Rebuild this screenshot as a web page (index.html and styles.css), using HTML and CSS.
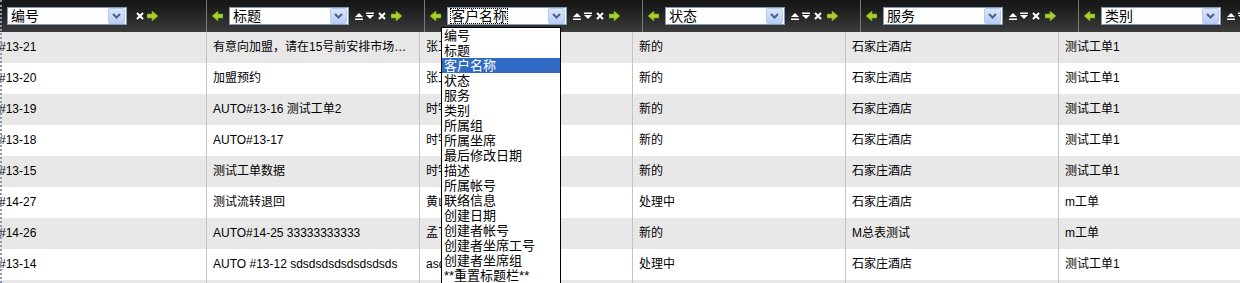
FILE: index.html
```
<!DOCTYPE html>
<html lang="zh-CN">
<head>
    <meta charset="UTF-8">
    <title>工单列表</title>
    <link rel="stylesheet" href="styles.css">
</head>
<body>
    <div class="grid">
        <div class="head">
            <div class="hcol first">
                <div class="combo"><span class="combo-text">编号</span><span class="combo-btn"><svg width="9" height="6" viewBox="0 0 9 6"><path d="M1 1 L4.5 4.5 L8 1" fill="none" stroke="#4d6185" stroke-width="2"/></svg></span></div>
                <svg class="ico x" width="10" height="10" viewBox="0 0 10 10"><path d="M2 2 L8 8 M8 2 L2 8" stroke="#fff" stroke-width="2"/></svg>
                <svg class="ico rarrow" width="11" height="10" viewBox="0 0 11 10"><path d="M0 3 H5 V0 L11 5 L5 10 V7 H0 Z" fill="#a4d22c" stroke="#7aa018" stroke-width="0.6"/></svg>
            </div>
            <div class="hcol">
                <svg class="ico larrow" width="11" height="10" viewBox="0 0 11 10"><path d="M11 3 H6 V0 L0 5 L6 10 V7 H11 Z" fill="#a4d22c" stroke="#7aa018" stroke-width="0.6"/></svg>
                <div class="combo"><span class="combo-text">标题</span><span class="combo-btn"><svg width="9" height="6" viewBox="0 0 9 6"><path d="M1 1 L4.5 4.5 L8 1" fill="none" stroke="#4d6185" stroke-width="2"/></svg></span></div>
                <svg class="ico up" width="10" height="10" viewBox="0 0 10 10"><path d="M1 6 L5 2 L9 6 Z M1 7.5 H9 V9 H1 Z" fill="#fff"/></svg>
                <svg class="ico down" width="10" height="10" viewBox="0 0 10 10"><path d="M1 1.5 H9 V3 H1 Z M1 4 L9 4 L5 8 Z" fill="#fff"/></svg>
                <svg class="ico x" width="10" height="10" viewBox="0 0 10 10"><path d="M2 2 L8 8 M8 2 L2 8" stroke="#fff" stroke-width="2"/></svg>
                <svg class="ico rarrow" width="11" height="10" viewBox="0 0 11 10"><path d="M0 3 H5 V0 L11 5 L5 10 V7 H0 Z" fill="#a4d22c" stroke="#7aa018" stroke-width="0.6"/></svg>
            </div>
            <div class="hcol">
                <svg class="ico larrow" width="11" height="10" viewBox="0 0 11 10"><path d="M11 3 H6 V0 L0 5 L6 10 V7 H11 Z" fill="#a4d22c" stroke="#7aa018" stroke-width="0.6"/></svg>
                <div class="combo open"><span class="combo-text"><span class="focus">客户名称</span></span><span class="combo-btn"><svg width="9" height="6" viewBox="0 0 9 6"><path d="M1 1 L4.5 4.5 L8 1" fill="none" stroke="#4d6185" stroke-width="2"/></svg></span></div>
                <svg class="ico up" width="10" height="10" viewBox="0 0 10 10"><path d="M1 6 L5 2 L9 6 Z M1 7.5 H9 V9 H1 Z" fill="#fff"/></svg>
                <svg class="ico down" width="10" height="10" viewBox="0 0 10 10"><path d="M1 1.5 H9 V3 H1 Z M1 4 L9 4 L5 8 Z" fill="#fff"/></svg>
                <svg class="ico x" width="10" height="10" viewBox="0 0 10 10"><path d="M2 2 L8 8 M8 2 L2 8" stroke="#fff" stroke-width="2"/></svg>
                <svg class="ico rarrow" width="11" height="10" viewBox="0 0 11 10"><path d="M0 3 H5 V0 L11 5 L5 10 V7 H0 Z" fill="#a4d22c" stroke="#7aa018" stroke-width="0.6"/></svg>
            </div>
            <div class="hcol">
                <svg class="ico larrow" width="11" height="10" viewBox="0 0 11 10"><path d="M11 3 H6 V0 L0 5 L6 10 V7 H11 Z" fill="#a4d22c" stroke="#7aa018" stroke-width="0.6"/></svg>
                <div class="combo"><span class="combo-text">状态</span><span class="combo-btn"><svg width="9" height="6" viewBox="0 0 9 6"><path d="M1 1 L4.5 4.5 L8 1" fill="none" stroke="#4d6185" stroke-width="2"/></svg></span></div>
                <svg class="ico up" width="10" height="10" viewBox="0 0 10 10"><path d="M1 6 L5 2 L9 6 Z M1 7.5 H9 V9 H1 Z" fill="#fff"/></svg>
                <svg class="ico down" width="10" height="10" viewBox="0 0 10 10"><path d="M1 1.5 H9 V3 H1 Z M1 4 L9 4 L5 8 Z" fill="#fff"/></svg>
                <svg class="ico x" width="10" height="10" viewBox="0 0 10 10"><path d="M2 2 L8 8 M8 2 L2 8" stroke="#fff" stroke-width="2"/></svg>
                <svg class="ico rarrow" width="11" height="10" viewBox="0 0 11 10"><path d="M0 3 H5 V0 L11 5 L5 10 V7 H0 Z" fill="#a4d22c" stroke="#7aa018" stroke-width="0.6"/></svg>
            </div>
            <div class="hcol">
                <svg class="ico larrow" width="11" height="10" viewBox="0 0 11 10"><path d="M11 3 H6 V0 L0 5 L6 10 V7 H11 Z" fill="#a4d22c" stroke="#7aa018" stroke-width="0.6"/></svg>
                <div class="combo"><span class="combo-text">服务</span><span class="combo-btn"><svg width="9" height="6" viewBox="0 0 9 6"><path d="M1 1 L4.5 4.5 L8 1" fill="none" stroke="#4d6185" stroke-width="2"/></svg></span></div>
                <svg class="ico up" width="10" height="10" viewBox="0 0 10 10"><path d="M1 6 L5 2 L9 6 Z M1 7.5 H9 V9 H1 Z" fill="#fff"/></svg>
                <svg class="ico down" width="10" height="10" viewBox="0 0 10 10"><path d="M1 1.5 H9 V3 H1 Z M1 4 L9 4 L5 8 Z" fill="#fff"/></svg>
                <svg class="ico x" width="10" height="10" viewBox="0 0 10 10"><path d="M2 2 L8 8 M8 2 L2 8" stroke="#fff" stroke-width="2"/></svg>
                <svg class="ico rarrow" width="11" height="10" viewBox="0 0 11 10"><path d="M0 3 H5 V0 L11 5 L5 10 V7 H0 Z" fill="#a4d22c" stroke="#7aa018" stroke-width="0.6"/></svg>
            </div>
            <div class="hcol last">
                <svg class="ico larrow" width="11" height="10" viewBox="0 0 11 10"><path d="M11 3 H6 V0 L0 5 L6 10 V7 H11 Z" fill="#a4d22c" stroke="#7aa018" stroke-width="0.6"/></svg>
                <div class="combo"><span class="combo-text">类别</span><span class="combo-btn"><svg width="9" height="6" viewBox="0 0 9 6"><path d="M1 1 L4.5 4.5 L8 1" fill="none" stroke="#4d6185" stroke-width="2"/></svg></span></div>
                <svg class="ico up" width="10" height="10" viewBox="0 0 10 10"><path d="M1 6 L5 2 L9 6 Z M1 7.5 H9 V9 H1 Z" fill="#fff"/></svg>
                <svg class="ico down" width="10" height="10" viewBox="0 0 10 10"><path d="M1 1.5 H9 V3 H1 Z M1 4 L9 4 L5 8 Z" fill="#fff"/></svg>
                <svg class="ico x" width="10" height="10" viewBox="0 0 10 10"><path d="M2 2 L8 8 M8 2 L2 8" stroke="#fff" stroke-width="2"/></svg>
            </div>
        </div>

        <div class="body">
            <div class="row odd">
                <div class="cell first">#13-21</div>
                <div class="cell">有意向加盟，请在15号前安排市场部人员联系</div>
                <div class="cell">张工</div>
                <div class="cell">新的</div>
                <div class="cell">石家庄酒店</div>
                <div class="cell">测试工单1</div>
            </div>
            <div class="row">
                <div class="cell first">#13-20</div>
                <div class="cell">加盟预约</div>
                <div class="cell">张工</div>
                <div class="cell">新的</div>
                <div class="cell">石家庄酒店</div>
                <div class="cell">测试工单1</div>
            </div>
            <div class="row odd">
                <div class="cell first">#13-19</div>
                <div class="cell">AUTO#13-16 测试工单2</div>
                <div class="cell">时宇</div>
                <div class="cell">新的</div>
                <div class="cell">石家庄酒店</div>
                <div class="cell">测试工单1</div>
            </div>
            <div class="row">
                <div class="cell first">#13-18</div>
                <div class="cell">AUTO#13-17</div>
                <div class="cell">时宇</div>
                <div class="cell">新的</div>
                <div class="cell">石家庄酒店</div>
                <div class="cell">测试工单1</div>
            </div>
            <div class="row odd">
                <div class="cell first">#13-15</div>
                <div class="cell">测试工单数据</div>
                <div class="cell">时宇</div>
                <div class="cell">新的</div>
                <div class="cell">石家庄酒店</div>
                <div class="cell">测试工单1</div>
            </div>
            <div class="row">
                <div class="cell first">#14-27</div>
                <div class="cell">测试流转退回</div>
                <div class="cell">黄山</div>
                <div class="cell">处理中</div>
                <div class="cell">石家庄酒店</div>
                <div class="cell">m工单</div>
            </div>
            <div class="row odd">
                <div class="cell first">#14-26</div>
                <div class="cell">AUTO#14-25 33333333333</div>
                <div class="cell">孟飞</div>
                <div class="cell">新的</div>
                <div class="cell">M总表测试</div>
                <div class="cell">m工单</div>
            </div>
            <div class="row">
                <div class="cell first">#13-14</div>
                <div class="cell">AUTO #13-12 sdsdsdsdsdsdsdsds</div>
                <div class="cell">asd</div>
                <div class="cell">处理中</div>
                <div class="cell">石家庄酒店</div>
                <div class="cell">测试工单1</div>
            </div>
            <div class="row odd">
                <div class="cell first">#13-13</div>
                <div class="cell">测试</div>
                <div class="cell">asd</div>
                <div class="cell">新的</div>
                <div class="cell">石家庄酒店</div>
                <div class="cell">测试工单1</div>
            </div>
        </div>

        <ul class="dropdown">
            <li>编号</li>
            <li>标题</li>
            <li class="selected">客户名称</li>
            <li>状态</li>
            <li>服务</li>
            <li>类别</li>
            <li>所属组</li>
            <li>所属坐席</li>
            <li>最后修改日期</li>
            <li>描述</li>
            <li>所属帐号</li>
            <li>联络信息</li>
            <li>创建日期</li>
            <li>创建者帐号</li>
            <li>创建者坐席工号</li>
            <li>创建者坐席组</li>
            <li>**重置标题栏**</li>
        </ul>
    </div>
</body>
</html>
```
FILE: styles.css
```
body {
    margin: 0;
    padding: 0;
    background-color: #fff;
    font-family: "Liberation Sans", "Noto Sans CJK SC", sans-serif;
    overflow: hidden;
}

.grid {
    position: relative;
    width: 1240px;
    height: 283px;
    overflow: hidden;
}

.grid::before {
    content: "";
    position: absolute;
    left: 0;
    top: 0;
    bottom: 0;
    width: 0;
    border-left: 2px dotted #8a9ab0;
    z-index: 3;
}

/* header */
.head {
    display: flex;
    height: 32px;
    background: linear-gradient(to bottom, #151515 0%, #1e1e1e 30%, #333 80%, #3c3c3c 100%);
}

.hcol {
    flex: none;
    width: 212px;
    border-right: 1px solid #7a7a7a;
    display: flex;
    align-items: center;
    padding-left: 5px;
    box-sizing: content-box;
}

.hcol.first {
    width: 199px;
    padding-left: 7px;
}

.hcol.last {
    border-right: none;
}

.ico {
    flex: none;
    display: block;
}

.larrow {
    margin-right: 6px;
}

.up {
    margin-left: 5px;
}

.down {
    margin-left: 1px;
}

.x {
    margin-left: 2px;
}

.first .x {
    margin-left: 8px;
}

.rarrow {
    margin-left: 4px;
}

.first .rarrow {
    margin-left: 2px;
}

.combo {
    flex: none;
    width: 120px;
    height: 18px;
    box-sizing: border-box;
    border: 1px solid #7f9db9;
    background-color: #fff;
    display: flex;
    align-items: center;
}

.combo-text {
    flex: 1;
    padding-left: 3px;
    font-size: 14px;
    line-height: 16px;
    color: #000;
    white-space: nowrap;
    overflow: hidden;
}

.focus {
    outline: 1px dotted #000;
    outline-offset: 0;
    display: inline-block;
    line-height: 14px;
}

.combo-btn {
    flex: none;
    width: 15px;
    height: 14px;
    margin-right: 1px;
    border: 1px solid #b6c9f3;
    border-radius: 2px;
    background: linear-gradient(to bottom, #dbe5fd, #b9cdf8);
    display: flex;
    align-items: center;
    justify-content: center;
}

/* rows */
.body {
    font-size: 12px;
    color: #000;
}

.row {
    display: flex;
    height: 31px;
    background-color: #fff;
}

.row.odd {
    background-color: #e8e8e8;
}

.cell {
    flex: none;
    width: 206px;
    box-sizing: content-box;
    padding-left: 6px;
    border-right: 1px solid #c4c4c4;
    line-height: 31px;
    white-space: nowrap;
    overflow: hidden;
    text-overflow: ellipsis;
}

.cell.first {
    padding-left: 0;
    text-indent: -1px;
}

.cell:nth-child(2) {
    width: 199px;
    padding-right: 7px;
}

/* open select list */
.dropdown {
    position: absolute;
    left: 441px;
    top: 27px;
    width: 120px;
    margin: 0;
    padding: 0;
    list-style: none;
    background-color: #fff;
    border: 1px solid #000;
    box-sizing: border-box;
    z-index: 2;
    font-size: 13px;
}

.dropdown li {
    height: 15px;
    line-height: 15px;
    padding-left: 2px;
    white-space: nowrap;
}

.dropdown li.selected {
    background-color: #316ac5;
    color: #fff;
}
```
